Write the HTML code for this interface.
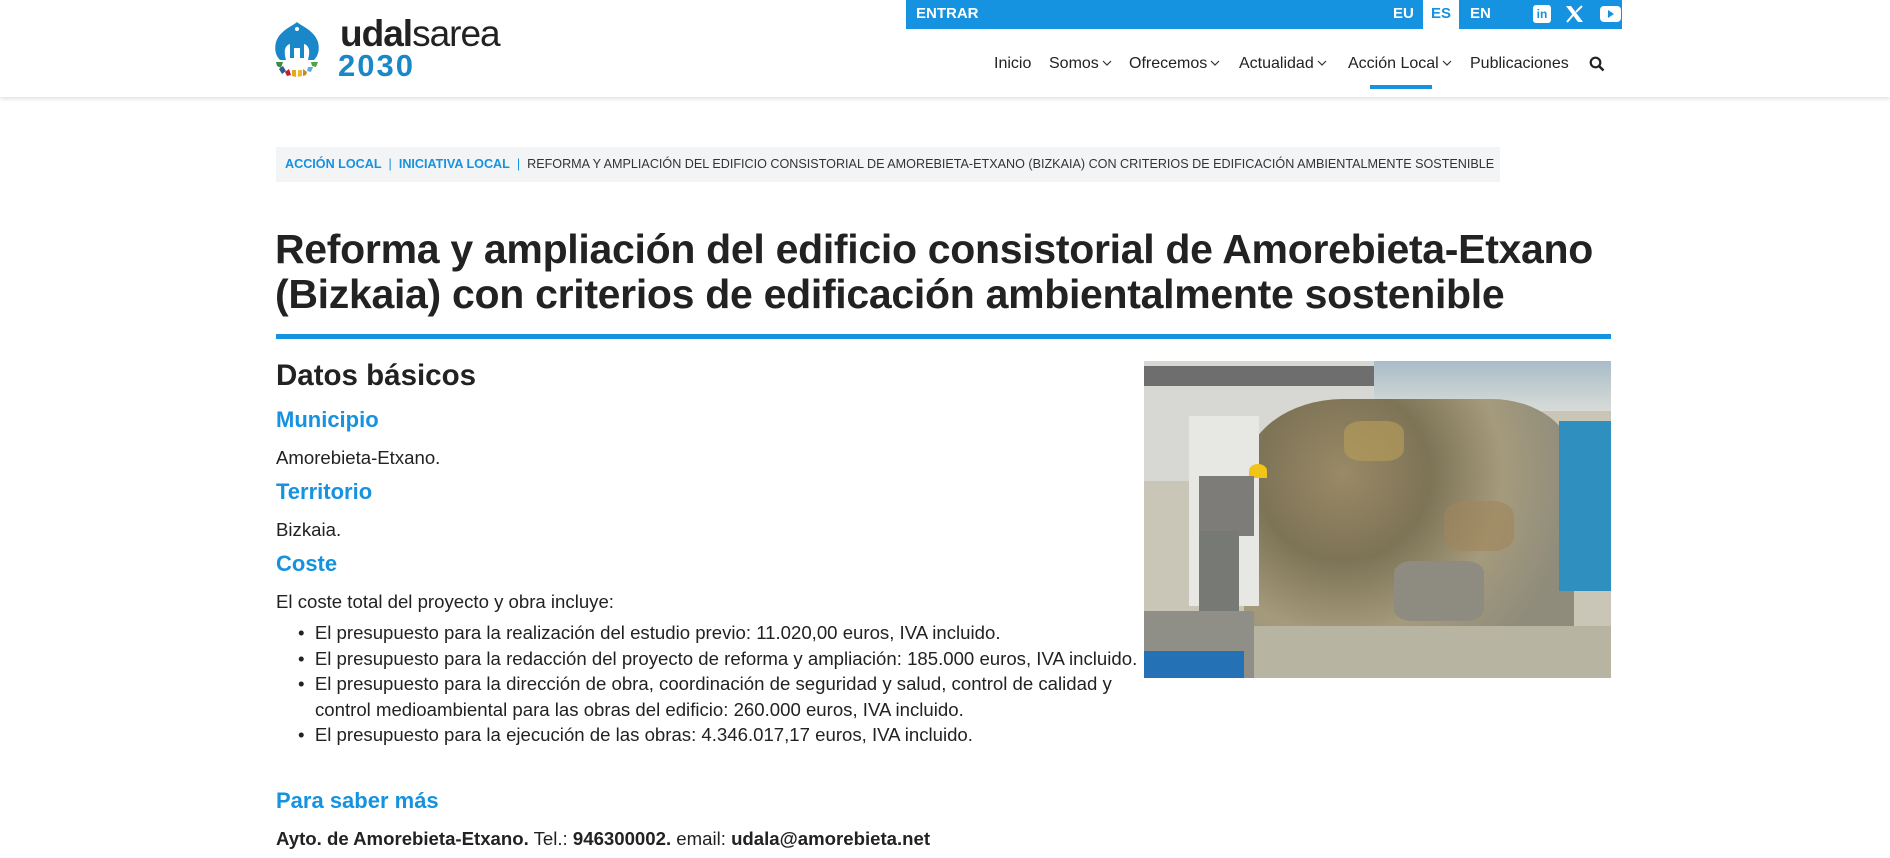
<!DOCTYPE html>
<html><head><meta charset="utf-8"><style>
*{margin:0;padding:0;box-sizing:border-box}
body{width:1890px;height:858px;overflow:hidden;background:#fff;font-family:"Liberation Sans",sans-serif;color:#222;position:relative}
.a{position:absolute;white-space:nowrap}
.hdr{position:absolute;left:0;top:0;width:1890px;height:97px;background:#fff;box-shadow:0 2px 4px rgba(0,0,0,.12)}
.top{position:absolute;left:906px;top:0;width:716px;height:29px;background:#1592e0;color:#fff;font-weight:bold;font-size:15px}
.nav{font-size:16px;color:#222;top:55px}
.nav svg{margin-left:3px;vertical-align:2px}
.bl{color:#1592e0}
.h3{font-size:22px;font-weight:bold;color:#1592e0}
.p{font-size:18.6px;color:#222}
</style></head><body>
<div class="hdr"></div>
<svg class="a" style="left:272px;top:18px" width="50" height="60" viewBox="0 0 50 60">
<path d="M25 4 C21 8 8 12 4 24 C2 32 4 38 8 42 L14 42 C12 34 12 28 18 26 L18 40 L22 40 L22 30 L28 30 L28 40 L32 40 L32 26 C38 28 38 34 36 42 L42 42 C46 38 48 32 46 24 C42 12 29 8 25 4Z" fill="#1a87c9"/>
<circle cx="25" cy="11" r="2" fill="#fff"/>
<path d="M4 44 L11 44 L9 50 L5 48Z" fill="#3c8d3f"/><path d="M7 51 L11 48 L14 53 L10 56Z" fill="#2e5d8f"/>
<path d="M13 54 L17 51 L19 57 L15 58Z" fill="#c5192d"/><path d="M20 52 L24 52 L24 59 L20 58Z" fill="#e5a81d"/>
<path d="M26 52 L30 52 L30 58 L26 59Z" fill="#f3b72b"/><path d="M31 51 L35 54 L34 57 L31 58Z" fill="#bf8b2e"/>
<path d="M36 49 L41 49 L39 54 L35 53Z" fill="#58b0e0"/><path d="M39 44 L46 44 L44 49 L40 48Z" fill="#56a046"/>
</svg>
<div class="a" style="left:340px;top:13px;font-size:37px;color:#222;letter-spacing:-1px"><b>udal</b>sarea</div>
<div class="a" style="left:338px;top:48px;font-size:31px;font-weight:bold;color:#1a87c9;letter-spacing:2px">2030</div>
<div class="top">
<span class="a" style="left:10px;top:5px">ENTRAR</span>
<span class="a" style="left:487px;top:5px">EU</span>
<div class="a" style="left:517px;top:0;width:36px;height:29px;background:#fff"></div>
<span class="a" style="left:525px;top:5px;color:#1592e0">ES</span>
<span class="a" style="left:564px;top:5px">EN</span>
<div class="a" style="left:627px;top:5px;width:18px;height:18px;background:#fff;border-radius:3px;color:#1592e0;font-size:12px;text-align:center;line-height:19px">in</div>
<svg class="a" style="left:659px;top:5px" width="19" height="18" viewBox="0 0 19 18"><path d="M1 1 L6 1 L18 17 L13 17Z" fill="#fff"/><path d="M2 17 L8 10 M11 7 L17 1" stroke="#fff" stroke-width="2"/></svg>
<div class="a" style="left:694px;top:6px;width:21px;height:16px;background:#fff;border-radius:4px"><div class="a" style="left:8px;top:4px;border-left:6px solid #1592e0;border-top:4px solid transparent;border-bottom:4px solid transparent"></div></div>
</div>
<div class="a nav" style="left:994px">Inicio</div>
<div class="a nav" style="left:1049px">Somos<svg width="10" height="6"><path d="M1 1L5 5L9 1" fill="none" stroke="#333" stroke-width="1.2"/></svg></div>
<div class="a nav" style="left:1129px">Ofrecemos<svg width="10" height="6"><path d="M1 1L5 5L9 1" fill="none" stroke="#333" stroke-width="1.2"/></svg></div>
<div class="a nav" style="left:1239px">Actualidad<svg width="10" height="6"><path d="M1 1L5 5L9 1" fill="none" stroke="#333" stroke-width="1.2"/></svg></div>
<div class="a nav" style="left:1348px">Acción Local<svg width="10" height="6"><path d="M1 1L5 5L9 1" fill="none" stroke="#333" stroke-width="1.2"/></svg></div>
<div class="a nav" style="left:1470px">Publicaciones</div>
<svg class="a" style="left:1589px;top:56px" width="16" height="16" viewBox="0 0 16 16"><circle cx="6.5" cy="6.5" r="4.8" fill="none" stroke="#222" stroke-width="2.2"/><path d="M10 10 L14.5 14.5" stroke="#222" stroke-width="2.5"/></svg>
<div class="a" style="left:1370px;top:85px;width:62px;height:4px;background:#1592e0"></div>
<div class="a" style="left:276px;top:147px;width:1224px;height:35px;background:#f3f4f6;font-size:12.6px;line-height:35px;padding-left:9px;color:#333">
<b class="bl">ACCIÓN LOCAL</b> &nbsp;<span class="bl">|</span>&nbsp; <b class="bl">INICIATIVA LOCAL</b> &nbsp;<span class="bl">|</span>&nbsp; REFORMA Y AMPLIACIÓN DEL EDIFICIO CONSISTORIAL DE AMOREBIETA-ETXANO (BIZKAIA) CON CRITERIOS DE EDIFICACIÓN AMBIENTALMENTE SOSTENIBLE</div>
<div class="a" style="left:275px;top:227px;font-size:41px;font-weight:bold;line-height:45px;color:#222;letter-spacing:-.3px">Reforma y ampliación del edificio consistorial de Amorebieta-Etxano<br>(Bizkaia) con criterios de edificación ambientalmente sostenible</div>
<div class="a" style="left:276px;top:334px;width:1335px;height:5px;background:#1592e0"></div>
<div class="a" style="left:276px;top:359px;font-size:29.5px;font-weight:bold">Datos básicos</div>
<div class="a h3" style="left:276px;top:407px">Municipio</div>
<div class="a p" style="left:276px;top:447px">Amorebieta-Etxano.</div>
<div class="a h3" style="left:276px;top:479px">Territorio</div>
<div class="a p" style="left:276px;top:519px">Bizkaia.</div>
<div class="a h3" style="left:276px;top:551px">Coste</div>
<div class="a p" style="left:276px;top:591px">El coste total del proyecto y obra incluye:</div>
<div class="a p" style="left:298px;top:620px;line-height:25.6px">
•&nbsp;&nbsp;El presupuesto para la realización del estudio previo: 11.020,00 euros, IVA incluido.<br>
•&nbsp;&nbsp;El presupuesto para la redacción del proyecto de reforma y ampliación: 185.000 euros, IVA incluido.<br>
•&nbsp;&nbsp;El presupuesto para la dirección de obra, coordinación de seguridad y salud, control de calidad y<br>
<span style="padding-left:17px">control medioambiental para las obras del edificio: 260.000 euros, IVA incluido.</span><br>
•&nbsp;&nbsp;El presupuesto para la ejecución de las obras: 4.346.017,17 euros, IVA incluido.</div>
<div class="a h3" style="left:276px;top:788px">Para saber más</div>
<div class="a p" style="left:276px;top:828px"><b>Ayto. de Amorebieta-Etxano.</b> Tel.: <b>946300002.</b> email: <b>udala@amorebieta.net</b></div>
<div class="a" style="left:1144px;top:361px;width:467px;height:317px;overflow:hidden;background:#c9c6b8">
<div class="a" style="left:0;top:0;width:467px;height:50px;background:linear-gradient(#a9bcc8,#d8dcd8)"></div>
<div class="a" style="left:0;top:0;width:230px;height:120px;background:#d7d8d4"></div>
<div class="a" style="left:0;top:5px;width:230px;height:20px;background:#6e6e6e"></div>
<div class="a" style="left:100px;top:38px;width:330px;height:250px;border-radius:30% 25% 8% 8%;background:radial-gradient(circle at 30% 30%,#9a8a66,#7d7356 30%,#a59a7c 55%,#8f8c7c 80%)"></div>
<div class="a" style="left:200px;top:60px;width:60px;height:40px;background:#b49a5a;opacity:.7;border-radius:30%"></div>
<div class="a" style="left:300px;top:140px;width:70px;height:50px;background:#a0855a;opacity:.6;border-radius:30%"></div>
<div class="a" style="left:250px;top:200px;width:90px;height:60px;background:#8e8c80;border-radius:20%"></div>
<div class="a" style="left:415px;top:60px;width:55px;height:170px;background:#2f8fbf"></div>
<div class="a" style="left:45px;top:55px;width:70px;height:190px;background:#e7e7e3"></div>
<div class="a" style="left:105px;top:103px;width:18px;height:14px;border-radius:50% 50% 0 0;background:#f0c419"></div>
<div class="a" style="left:55px;top:115px;width:55px;height:60px;background:#7d7c78"></div>
<div class="a" style="left:55px;top:170px;width:40px;height:90px;background:#777a74"></div>
<div class="a" style="left:0;top:250px;width:110px;height:67px;background:#8f8f88"></div>
<div class="a" style="left:0;top:290px;width:100px;height:27px;background:#2471b5"></div>
<div class="a" style="left:110px;top:265px;width:357px;height:52px;background:#b8b4a2"></div>
</div>
</body></html>
